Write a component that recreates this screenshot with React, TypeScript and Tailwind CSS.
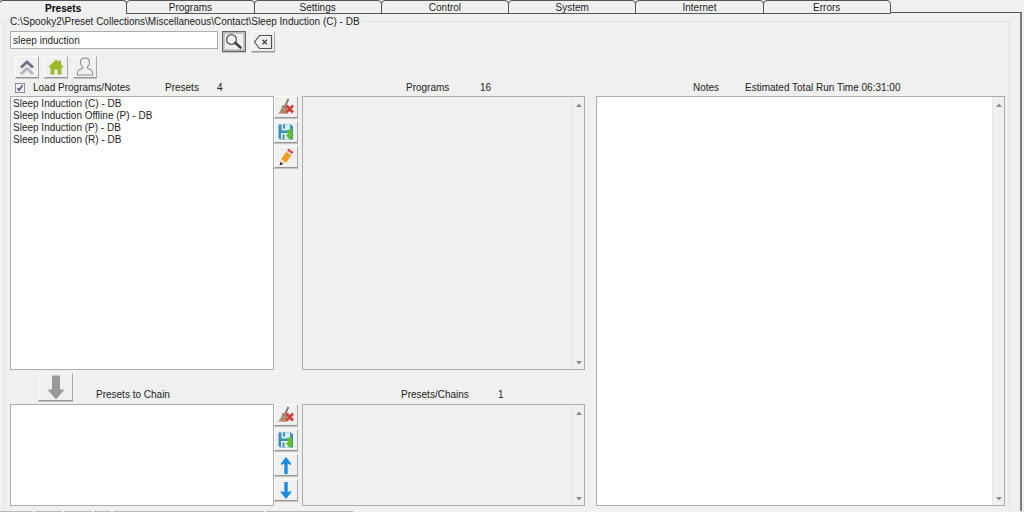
import React, { useState } from 'react';
import clsx from 'clsx';

const tabs = ['Presets', 'Programs', 'Settings', 'Control', 'System', 'Internet', 'Errors'];

const presets = [
  'Sleep Induction (C) - DB',
  'Sleep Induction Offline (P) - DB',
  'Sleep Induction (P) - DB',
  'Sleep Induction (R) - DB',
];

const statusCells = ['w-[33px]', 'w-[27px]', 'w-[28px]', 'w-[17px]', 'w-[151px]', 'w-[87px]'];

interface IconButtonProps {
  label: string;
  className?: string;
  children: React.ReactNode;
}

function IconButton({ label, className, children }: IconButtonProps) {
  return (
    <button
      type="button"
      aria-label={label}
      className={clsx(
        'flex items-center justify-center shrink-0 bg-[#f0f0f0] border border-t-[#fafafa] border-l-[#fafafa] border-r-[#a8a8a8] border-b-[#949494] shadow-[0_1px_0_#c4c4c4]',
        className ?? 'w-6 h-[22px]'
      )}
    >
      {children}
    </button>
  );
}

function SearchIcon() {
  return (
    <svg width="20" height="17" viewBox="0 0 20 17" fill="none">
      <rect x="0.5" y="0.5" width="19" height="16" stroke="#999" strokeDasharray="1 1" />
      <circle cx="7.5" cy="6.5" r="4.9" stroke="#555" strokeWidth="1.3" fill="#f6f6f6" />
      <path d="M11.2 9.8 16.5 14.5" stroke="#444" strokeWidth="2.6" strokeLinecap="round" />
    </svg>
  );
}

function ClearIcon() {
  return (
    <svg width="20" height="16" viewBox="0 0 20 16" fill="none">
      <path d="M1.5 8 6.5 1.5H18.5V14.5H6.5Z" stroke="#555" strokeWidth="1.2" />
      <path d="m9.5 5.8 4.4 4.4m0-4.4-4.4 4.4" stroke="#444" strokeWidth="1.4" />
    </svg>
  );
}

function CollapseIcon() {
  return (
    <svg width="16" height="17" viewBox="0 0 16 17" fill="none" strokeWidth="3">
      <path d="M2 8.5 8 3l6 5.5" stroke="#6d7488" />
      <path d="M2 15 8 9.5l6 5.5" stroke="#b4b4c0" />
    </svg>
  );
}

function HomeIcon() {
  return (
    <svg width="16" height="16" viewBox="0 0 16 16" fill="#9aba2c">
      <path d="M8 0.5 10.5 3V1.5H13V5.3L15.8 8.3H13.5V15.5H9.5V10.5H6.5V15.5H2.5V8.3H0.2Z" />
    </svg>
  );
}

function UserIcon() {
  return (
    <svg width="18" height="20" viewBox="0 0 18 20" fill="none" stroke="#8c8c8c" strokeWidth="1.1">
      <path d="M6.7 10.2C5.2 9 4.5 7.3 4.5 5.5 4.5 2.8 6.3 1 9 1s4.5 1.8 4.5 4.5c0 1.8-.7 3.5-2.2 4.7 0 1.3.7 1.6 2.4 2.1 2.3.7 3 1.7 3 5.7H1.3c0-4 .7-5 3-5.7 1.7-.5 2.4-.8 2.4-2.1Z" />
    </svg>
  );
}

function BroomIcon() {
  return (
    <svg width="18" height="18" viewBox="0 0 18 18" fill="none">
      <path d="M11.5 1 8 8" stroke="#8a7560" strokeWidth="1.8" />
      <path d="M5.5 7 10.5 9.5 10 16 1 15.5C3.5 13 4.5 10 5.5 7Z" fill="#b59a7c" />
      <path d="M5.5 7 10.5 9.5 10.3 11 5 8.6Z" fill="#847c78" />
      <path d="m4 15 2-4m1 4.5 1.5-4" stroke="#8b7157" />
      <path d="m9.5 7.5 6.5 7m0-7-6.5 7" stroke="#d43c3c" strokeWidth="2.6" />
    </svg>
  );
}

function SaveIcon() {
  return (
    <svg width="16" height="16" viewBox="0 0 16 16">
      <path d="M.5 .5H13L15 2.5V15.5H2L.5 14Z" fill="#398fb5" />
      <path d="M3.5 .5H12V6.5H3.5Z" fill="#d8edf4" />
      <path d="M5 .5H7V4.5H5Z" fill="#398fb5" />
      <path d="M3 9H12V15.5H3Z" fill="#e3eef1" />
      <path d="M4.5 10.5H6.5V15.5H4.5Z" fill="#4c91af" />
      <path d="M9.5 5.5H14V11H16L11.8 16 7.5 11H9.5Z" fill="#62c12c" />
    </svg>
  );
}

function PencilIcon() {
  return (
    <svg width="16" height="18" viewBox="0 0 16 18">
      <path d="m10.5 .5 5 3.4-1.5 2.3-5-3.4Z" fill="#df4a4d" />
      <path d="m9 2.8 5 3.4-.8 1.2-5-3.4Z" fill="#dce3e8" />
      <path d="m8.2 4 5 3.4-5.2 7.3-5-3.4Z" fill="#f39a20" />
      <path d="m3 11.3 5 3.4L2 17.3Z" fill="#f2dfc4" />
      <path d="m2.4 13.8 2.8 2.1L1.6 17.6Z" fill="#333" />
    </svg>
  );
}

function ArrowIcon({ down }: { down?: boolean }) {
  return (
    <svg width="12" height="17" viewBox="0 0 12 17" fill="#168de2" className={clsx(down && 'rotate-180')}>
      <path d="M6 0 11.5 7 10.5 8 7.7 6.5V17H4.3V6.5L1.5 8 .5 7Z" />
    </svg>
  );
}

function Scrollbar() {
  return (
    <div className="absolute inset-y-0 right-0 w-3 border-l border-[#e6e6e6] bg-[#f0f0f0] flex flex-col items-center justify-between pt-1.5 pb-1">
      <svg width="6" height="4" viewBox="0 0 6 4" fill="#8c8c8c">
        <path d="M3 0.5 6 4H0Z" />
      </svg>
      <svg width="6" height="4" viewBox="0 0 6 4" fill="#8c8c8c">
        <path d="M0 0H6L3 3.5Z" />
      </svg>
    </div>
  );
}

export default function App() {
  const [active, setActive] = useState('Presets');
  const [query, setQuery] = useState('sleep induction');

  return (
    <div className="min-h-screen flex flex-col bg-[#f0f0f0] text-[#222] text-[10px] leading-3 font-['Liberation_Sans',Arial,sans-serif]">
      <nav className="flex h-[13px]">
        <div className="w-[87%] grid grid-cols-7">
          {tabs.map((tab) => (
            <button
              key={tab}
              type="button"
              onClick={() => setActive(tab)}
              className={clsx(
                '-ml-px pt-px border-t border-x border-[#555] rounded-t-[4px] leading-[11px]',
                tab === active ? 'font-bold text-black' : 'border-b'
              )}
            >
              {tab}
            </button>
          ))}
        </div>
        <div className="flex-1 border-b border-[#555] mr-0.5" />
      </nav>

      <main className="flex-1 flex flex-col mr-0.5 pt-2 border-r-2 border-[#7b7b7b]">
        <section className="flex-1 flex flex-col ml-1 mr-2.5 pl-[5px] pr-1 pb-[5px] border border-b-0 border-[#dce3e8]">
          <h1 className="self-start -mt-1.5 -ml-0.5 px-0.5 bg-[#f0f0f0]">
            C:\Spooky2\Preset Collections\Miscellaneous\Contact\Sleep Induction (C) - DB
          </h1>

          <div className="flex items-start pt-[3px]">
            <input
              type="text"
              aria-label="Search presets"
              value={query}
              onChange={(e) => setQuery(e.target.value)}
              className="w-52 h-[18px] px-0.5 bg-white border border-[#abadb3] outline-none"
            />
            <IconButton label="Search" className="ml-1 w-6 h-[21px] border-[#666]! outline-1 -outline-offset-2 outline-[#bbb]">
              <SearchIcon />
            </IconButton>
            <IconButton label="Clear search" className="ml-[5px] w-6 h-[21px]">
              <ClearIcon />
            </IconButton>
          </div>

          <div className="flex gap-[5px] pl-[5px] pt-1 pb-0.5">
            <IconButton label="Up one level">
              <CollapseIcon />
            </IconButton>
            <IconButton label="Home">
              <HomeIcon />
            </IconButton>
            <IconButton label="User presets">
              <UserIcon />
            </IconButton>
          </div>

          <div className="flex-1 grid grid-cols-[264fr_24px_287fr_420fr] grid-rows-[16px_274fr_34px_102fr]">
            <div className="col-span-2 flex items-center pl-[5px]">
              <label className="flex items-center gap-2 w-[150px]">
                <input
                  type="checkbox"
                  defaultChecked
                  className="peer appearance-none w-[10px] h-[10px] border border-[#8e8f8f] bg-[#eef1f6]"
                />
                <svg width="8" height="8" viewBox="0 0 8 8" fill="none" className="-ml-[17px] mr-px pointer-events-none invisible peer-checked:visible">
                  <path d="M1.5 4 3.2 6.2 6.5 1.2" stroke="#3e4f9c" strokeWidth="1.5" />
                </svg>
                Load Programs/Notes
              </label>
              <span className="w-[52px]">Presets</span>
              <span>4</span>
            </div>
            <div className="flex items-center pl-[108px]">
              <span className="w-[74px]">Programs</span>
              <span>16</span>
            </div>
            <div className="flex items-center pl-[108px]">
              <label htmlFor="notes" className="w-[52px]">Notes</label>
              <span>Estimated Total Run Time 06:31:00</span>
            </div>

            <ul className="bg-white border border-[#abadb3] px-0.5 py-px">
              {presets.map((preset) => (
                <li key={preset}>{preset}</li>
              ))}
            </ul>
            <div className="flex flex-col gap-[3px]">
              <IconButton label="Delete preset">
                <BroomIcon />
              </IconButton>
              <IconButton label="Save preset">
                <SaveIcon />
              </IconButton>
              <IconButton label="Edit preset">
                <PencilIcon />
              </IconButton>
            </div>
            <div className="relative ml-1 border border-[#abadb3]">
              <Scrollbar />
            </div>
            <div className="relative row-span-3 ml-[11px] flex border border-[#abadb3] bg-white">
              <textarea id="notes" className="flex-1 resize-none bg-white outline-none p-1" />
              <Scrollbar />
            </div>

            <div className="col-span-2 flex items-center pl-7">
              <IconButton label="Add to chain" className="w-[35px] h-7">
                <svg width="18" height="25" viewBox="0 0 18 25" fill="#999">
                  <path d="M5 .5H13V14.5H17.5L9 24.5 .5 14.5H5Z" />
                </svg>
              </IconButton>
              <span className="pl-[23px] pt-4">Presets to Chain</span>
            </div>
            <div className="flex items-center pl-[103px] pt-4">
              <span className="w-[97px]">Presets/Chains</span>
              <span>1</span>
            </div>

            <ul className="bg-white border border-[#abadb3]" />
            <div className="flex flex-col gap-[3px]">
              <IconButton label="Clear chain">
                <BroomIcon />
              </IconButton>
              <IconButton label="Save chain">
                <SaveIcon />
              </IconButton>
              <IconButton label="Move up">
                <ArrowIcon />
              </IconButton>
              <IconButton label="Move down">
                <ArrowIcon down />
              </IconButton>
            </div>
            <div className="relative ml-1 border border-[#abadb3]">
              <Scrollbar />
            </div>
          </div>
        </section>
      </main>

      <footer className="flex gap-0.5 h-px">
        {statusCells.map((width, i) => (
          <div key={i} className={clsx('bg-[#b8b8b8]', width)} />
        ))}
      </footer>
    </div>
  );
}
